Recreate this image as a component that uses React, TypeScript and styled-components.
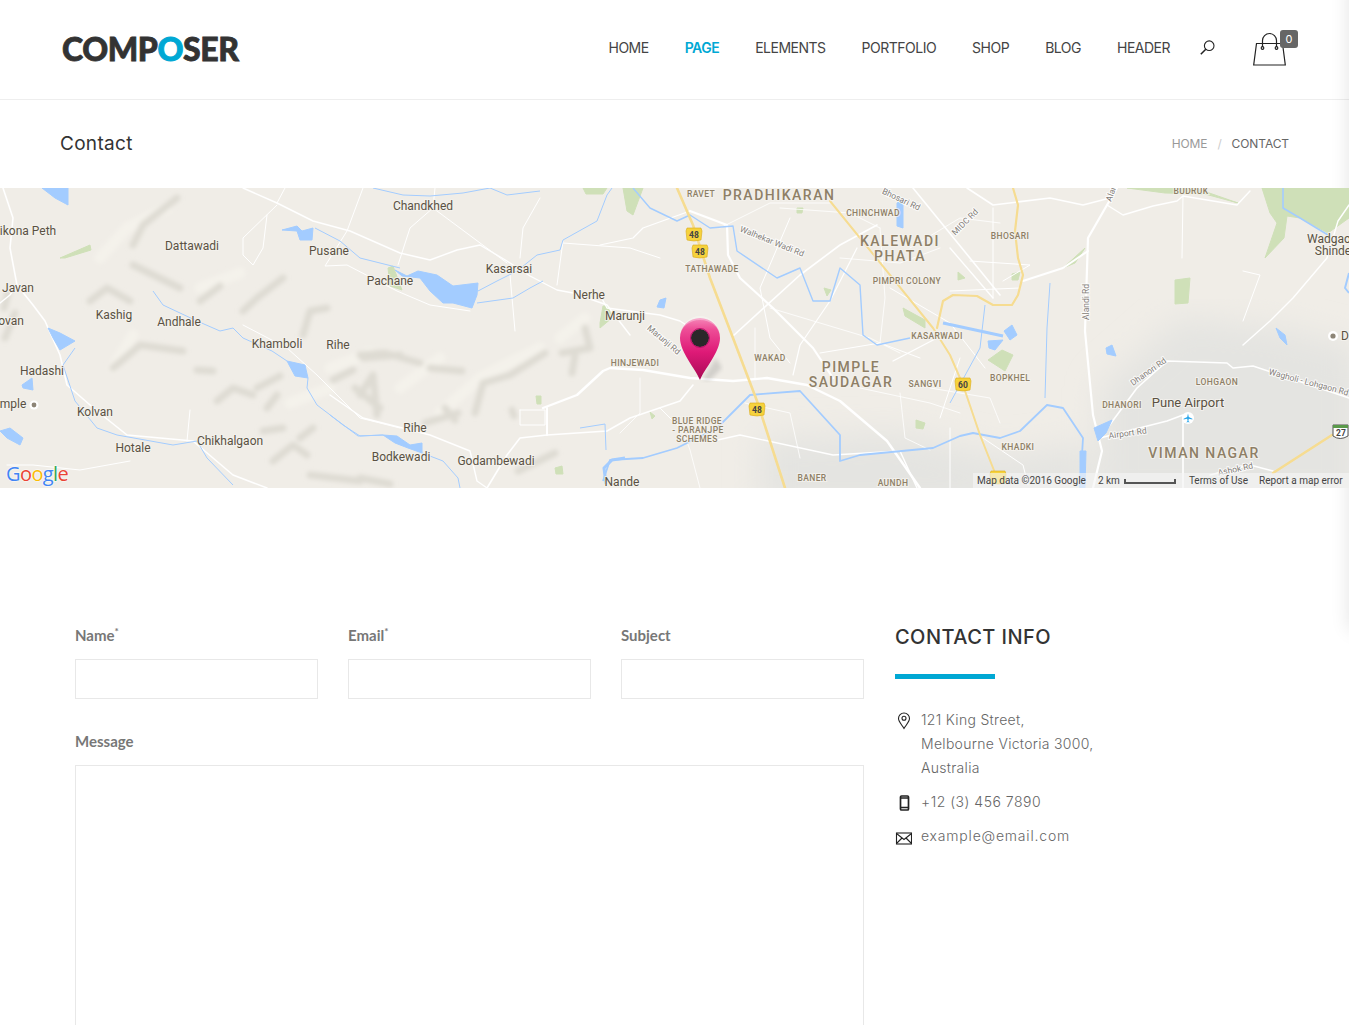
import React from "react";
import styled, { createGlobalStyle } from "styled-components";

const GlobalStyle = createGlobalStyle`
  html, body {
    margin: 0;
    padding: 0;
    height: 1025px;
    overflow: hidden;
    background: #fff;
  }
  * { box-sizing: border-box; }
`;

const POP = `"Inter", "Noto Sans", sans-serif`;

const Page = styled.div`
  position: relative;
  width: 1349px;
  height: 1025px;
  overflow: hidden;
  font-family: ${POP};
`;

// the closed off-canvas panel, only its shadow is visible
const OffCanvas = styled.div`
  position: absolute;
  top: -20px;
  left: 100%;
  width: 300px;
  height: 650px;
  box-shadow: 0 0 18px rgba(0, 0, 0, 0.11);
`;

const Header = styled.header`
  height: 100px;
  border-bottom: 1px solid #eeeeee;
  display: flex;
  align-items: center;
  justify-content: space-between;
  padding: 0 51px 4px 62px;
`;

const Logo = styled.div`
  font-family: "Lato", sans-serif;
  font-weight: 900;
  font-size: 32px;
  letter-spacing: -0.4px;
  line-height: 1;
  margin: 2px 0 0 0;
  color: #333;
  -webkit-text-stroke: 0.8px #333;
  span {
    color: #00a8d4;
    -webkit-text-stroke: 1px #00a8d4;
  }
`;

const HeaderRight = styled.div`
  display: flex;
  align-items: center;
`;

const Nav = styled.nav`
  display: flex;
  gap: 36px;
`;

const NavLink = styled.a<{ $active?: boolean }>`
  font-size: 14px;
  letter-spacing: -0.5px;
  font-weight: ${(p) => (p.$active ? 600 : 400)};
  color: ${(p) => (p.$active ? "#00a8d4" : "#444")};
`;

const SearchButton = styled.div`
  margin-left: 30px;
  width: 15px;
  height: 15px;
  display: flex;
`;

const Cart = styled.div`
  position: relative;
  margin-left: 38px;
  width: 45px;
  height: 34px;
  margin-top: 2px;
`;

const Badge = styled.span`
  position: absolute;
  left: 27px;
  top: -2px;
  width: 18px;
  height: 18px;
  border-radius: 3px;
  background: #666;
  color: #fff;
  font-size: 11px;
  display: flex;
  align-items: center;
  justify-content: center;
`;

const TitleBar = styled.div`
  height: 88px;
  display: flex;
  align-items: center;
  justify-content: space-between;
  padding: 0 60px 2px;
`;

const PageTitle = styled.h1`
  margin: 0;
  font-size: 19px;
  font-weight: 400;
  color: #333;
  letter-spacing: 0.3px;
`;

const Crumbs = styled.div`
  display: flex;
  align-items: center;
  font-size: 12px;
  letter-spacing: -0.1px;
`;

const Crumb = styled.span<{ $current?: boolean }>`
  color: ${(p) => (p.$current ? "#666" : "#999")};
`;

const CrumbSep = styled.span`
  color: #ccc;
  margin: 0 10px;
`;

const MapFrame = styled.div`
  position: relative;
  height: 300px;
  background: #f0ede7;
  overflow: hidden;
`;

const MapSvg = styled.svg`
  display: block;
  width: 1349px;
  height: 300px;
`;

const Road = styled.polyline<{ $w: number }>`
  fill: none;
  stroke: #fff;
  stroke-width: ${(p) => p.$w};
  stroke-linejoin: round;
  stroke-linecap: round;
`;

const Highway = styled(Road)`
  stroke: #f6dc91;
`;

const River = styled.polyline<{ $w: number }>`
  fill: none;
  stroke: #a3ccff;
  stroke-width: ${(p) => p.$w};
  stroke-linejoin: round;
`;

const Water = styled.polygon`
  fill: #a3ccff;
  stroke: #a3ccff;
  stroke-width: 1;
  stroke-linejoin: round;
`;

const Green = styled.polygon`
  fill: #cfe0b8;
  stroke: #cfe0b8;
  stroke-width: 1;
  stroke-linejoin: round;
`;

const Hill = styled.polyline<{ $light?: boolean }>`
  fill: none;
  stroke: ${(p) => (p.$light ? "#f4f2eb" : "#dedbd3")};
  stroke-width: ${(p) => (p.$light ? 11 : 7)};
  stroke-linecap: round;
  stroke-linejoin: round;
`;

const Urban = styled.polygon`
  fill: #e4e4e1;
`;

const Place = styled.text<{ $size?: number }>`
  font-family: "Roboto", sans-serif;
  font-size: ${(p) => p.$size || 12}px;
  fill: #5a5143;
  text-anchor: middle;
  paint-order: stroke;
  stroke: rgba(245, 243, 238, 0.8);
  stroke-width: 2px;
`;

const District = styled.text<{ $big?: boolean }>`
  font-family: "Roboto", sans-serif;
  font-size: ${(p) => (p.$big ? 14 : 8.5)}px;
  font-weight: 500;
  letter-spacing: ${(p) => (p.$big ? 1.5 : 0.4)}px;
  fill: #8e7f66;
  text-anchor: middle;
  paint-order: stroke;
  stroke: rgba(245, 243, 238, 0.8);
  stroke-width: 2px;
`;

const RoadName = styled.text`
  font-family: "Roboto", sans-serif;
  font-size: 8.5px;
  fill: #85807a;
  text-anchor: middle;
  paint-order: stroke;
  stroke: rgba(255, 255, 255, 0.8);
  stroke-width: 2px;
`;

const ShieldText = styled.text`
  font-family: "Roboto", sans-serif;
  font-size: 8.5px;
  font-weight: 700;
  fill: #444;
  text-anchor: middle;
`;

const GoogleMark = styled.text`
  font-family: "Open Sans", sans-serif;
  font-size: 20px;
  font-weight: 400;
  letter-spacing: -0.6px;
  paint-order: stroke;
  stroke: rgba(255, 255, 255, 0.6);
  stroke-width: 1.5px;
`;

const MapCredits = styled.div`
  position: absolute;
  right: 0;
  bottom: 0;
  left: 973px;
  height: 15px;
  padding-left: 4px;
  display: flex;
  align-items: center;
  background: rgba(245, 245, 245, 0.62);
  font-family: "Roboto", sans-serif;
  font-size: 10px;
  color: #444;
  white-space: nowrap;
`;

const Credit = styled.span<{ $gap?: number }>`
  margin-left: ${(p) => p.$gap || 0}px;
`;

const ScaleBar = styled.span`
  width: 52px;
  height: 5px;
  margin-left: 4px;
  margin-top: 2px;
  border: 1px solid #555;
  border-top: 0;
  border-width: 0 2px 2px 2px;
`;

const Main = styled.main`
  display: grid;
  grid-template-columns: 789px 300px;
  column-gap: 31px;
  padding: 138px 0 0 75px;
`;

const FormGrid = styled.form`
  display: flex;
  flex-direction: column;
  gap: 33px;
`;

const FieldRow = styled.div`
  display: grid;
  grid-template-columns: repeat(3, 243px);
  column-gap: 30px;
`;

const Field = styled.div`
  display: flex;
  flex-direction: column;
`;

const Label = styled.label`
  font-family: "Lato", sans-serif;
  font-weight: 700;
  font-size: 15px;
  line-height: 18px;
  color: #777;
  margin-bottom: 15px;
  sup {
    font-size: 10px;
    line-height: 0;
  }
`;

const Input = styled.input`
  height: 40px;
  border: 1px solid #e8e8e8;
  background: #fff;
  outline: 0;
`;

const TextArea = styled.textarea`
  height: 320px;
  border: 1px solid #e8e8e8;
  background: #fff;
  outline: 0;
  resize: none;
`;

const Sidebar = styled.aside`
  display: flex;
  flex-direction: column;
`;

const InfoTitle = styled.h3`
  margin: 0;
  font-size: 20px;
  line-height: 22px;
  font-weight: 500;
  color: #333;
  letter-spacing: 0.45px;
`;

const InfoBar = styled.div`
  width: 100px;
  height: 5px;
  margin: 26px 0 29px;
  background: #00a8d4;
`;

const InfoList = styled.div`
  display: flex;
  flex-direction: column;
  gap: 10px;
`;

const InfoRow = styled.div<{ $spacing: number }>`
  display: flex;
  gap: 9px;
  font-size: 14px;
  font-weight: 300;
  line-height: 24px;
  letter-spacing: ${(p) => p.$spacing}px;
  color: #666;
`;

const InfoIcon = styled.svg<{ $thick?: boolean }>`
  flex: none;
  width: 17px;
  height: 24px;
  fill: none;
  stroke: #222;
  stroke-width: ${(p) => (p.$thick ? 1.7 : 1.1)};
`;

const roads: [number, string][] = [
  [1.6, "3,0 13,30 10,60 17,97 33,117 45,133 60,167 67,197 97,223 127,247 193,253 233,287 267,300"],
  [1.4, "0,115 10,107 17,97"],
  [1.4, "243,0 277,15 313,33 350,43 400,65 430,72 457,62 480,57 507,73 530,88 557,102 573,105 607,117 630,147"],
  [1, "277,15 285,0"],
  [1, "277,17 243,50 243,67 253,77 263,60 267,27"],
  [1, "363,0 347,43 325,78 347,77 397,103 430,117 470,123"],
  [1, "435,0 433,20 507,75"],
  [1, "433,20 410,40 398,77"],
  [1, "540,10 523,40 520,70"],
  [1, "563,53 557,97"],
  [1, "563,55 630,60 660,70"],
  [1, "510,87 515,143"],
  [1, "243,137 287,160 317,187 360,230 400,240"],
  [1.4, "330,207 363,230 430,247 470,263 477,293 487,300"],
  [2.4, "543,220 577,207 603,183 610,180 643,182 690,190 733,193 767,190 807,197 840,213 887,253 920,300"],
  [2, "547,220 547,247"],
  [1.6, "547,247 607,243 630,230 680,213 693,197"],
  [1.6, "547,247 520,250 507,267 487,300"],
  [1, "187,253 190,222"],
  [1, "7,277 33,277 80,282 130,273"],
  [2.2, "690,23 727,37 728,67 740,90 773,120 813,160 833,190"],
  [1.6, "733,148 800,87 840,57 877,37"],
  [1.4, "600,107 607,120 660,127 680,133 717,157"],
  [1.4, "713,253 740,247 833,267 900,263 917,300"],
  [1.4, "893,173 937,150"],
  [1.2, "793,187 800,157 830,113 857,60"],
  [1.6, "913,0 1000,107"],
  [1.2, "600,57 633,50 643,40 690,23"],
  [1, "890,100 950,135 985,180"],
  [1, "820,165 880,155 920,170"],
  [1, "660,220 680,240 700,250"],
  [1, "790,30 760,100 770,150 790,175"],
  [0.8, "770,120 870,150 900,165"],
  [0.8, "755,140 755,190"],
  [0.8, "880,40 885,110 880,155"],
  [0.8, "780,20 850,25 880,40"],
  [0.8, "745,215 790,225 800,270"],
  [0.8, "900,205 905,250 930,262"],
  [0.8, "860,200 930,215 960,225"],
  [0.8, "840,70 900,75 940,60"],
  [0.8, "720,40 770,15 830,15"],
  [0.8, "680,235 690,262 700,300"],
  [0.8, "640,190 640,225 620,245"],
  [0.8, "910,60 960,30 1000,35"],
  [0.8, "930,200 990,210 1000,235"],
  [2.2, "1117,0 1107,17 1088,50 1085,143 1093,227 1102,263 1093,300"],
  [2, "1023,93 1063,80 1088,63"],
  [1.4, "1107,17 1123,27 1153,18 1177,13 1183,8 1237,17 1250,3"],
  [1, "1183,8 1182,70"],
  [1.6, "967,0 993,17 1050,10 1083,17 1110,10"],
  [1.6, "1100,250 1137,200 1167,173 1227,175 1233,180 1253,178 1349,210"],
  [1.4, "1243,157 1270,133 1293,110 1327,70 1338,33 1349,17"],
  [1.6, "1100,250 1167,233 1183,227 1183,300"],
  [1.4, "1210,287 1250,277 1273,283"],
  [1.4, "950,60 993,110"],
  [1, "993,20 993,110"],
  [1, "950,103 1020,100"],
  [1, "970,73 1030,77 1003,93"],
  [1, "983,250 1023,277 1028,297"],
  [1, "1243,83 1260,87 1243,133"],
  [1, "950,240 950,300"],
  [1, "960,170 940,230"],
];

const highways: [number, string][] = [
  [2.6, "677,0 693,37 710,90 733,150 757,213 785,300"],
  [2, "830,13 933,140 950,167 963,197 980,247 997,290"],
  [2.2, "937,140 943,113 953,107 977,108 993,117 1012,117 1018,107 1023,87 1018,70 1015,43 1018,17 1013,0"],
  [2.6, "1332,247 1273,285"],
];

const rivers: [number, string][] = [
  [1.4, "633,0 650,20 677,33 690,27 710,40 733,38 737,63 777,90 800,80 813,113 830,113 840,80 860,97 863,147 877,157 910,150"],
  [1.8, "603,293 610,272 643,270 677,260 717,240 750,207 800,203 840,247 840,273 860,267 933,260 960,248 973,245 1000,250 1020,243 1047,217 1063,220 1083,250 1080,300"],
  [3, "943,135 1003,148"],
  [1, "373,0 403,7 430,8 463,5 490,0 507,7 540,3"],
  [1, "478,103 497,93 517,83 537,67 560,62 563,52 597,33 607,7 612,0"],
  [1, "477,115 513,110 530,100 543,93"],
  [1, "330,227 343,237 360,248 383,247"],
  [1, "422,265 443,273 458,290 460,300"],
  [1, "153,103 163,117 197,133 220,143 233,140 243,150 272,163 287,173"],
  [1, "308,190 307,200 317,217 358,248 383,247"],
  [1, "315,40 340,53 360,70 400,80"],
  [1, "75,160 63,177 75,213 97,240 117,247 173,257 197,253 207,270 233,297"],
  [3, "606,296 604,280 612,272 625,270"],
  [1, "580,240 605,236 606,262"],
  [1, "1050,95 1047,140 1045,210"],
  [1, "985,117 980,160 950,215"],
  [1.6, "1283,0 1283,20 1300,30 1328,47"],
  [2, "1349,85 1345,100 1349,105"],
];

const lakes = [
  "395,82 407,88 418,83 437,87 453,98 478,95 477,107 472,120 453,115 443,115 430,103 420,90 402,88",
  "383,247 397,248 410,257 422,255 422,265 408,260 395,255",
  "287,173 305,177 308,190 295,188",
  "42,0 68,0 68,17 55,10",
  "282,42 297,38 302,43 313,40 312,52 300,52 297,43",
  "48,140 60,145 75,153 60,162 53,150",
  "22,197 32,190 33,202 23,200",
  "0,243 10,240 23,250 20,257 7,250",
  "660,112 666,110 664,120 657,119",
  "1004,143 1012,137 1017,147 1010,152",
  "988,153 1003,152 995,162 989,160",
  "1106,160 1112,157 1116,168 1107,166",
  "1276,140 1285,147 1287,157 1280,150",
  "1094,240 1112,232 1106,245 1098,253",
  "1080,263 1086,263 1085,300 1080,300",
  "897,15 903,12 903,40 897,38",
];

const greens = [
  "1127,0 1195,0 1238,15 1205,6 1165,5",
  "1262,0 1349,0 1349,30 1328,45 1300,30 1287,28 1284,50 1265,70 1277,35 1270,25",
  "1175,92 1190,90 1188,115 1175,116",
  "988,172 1002,162 1013,167 1005,183",
  "623,0 643,0 633,27 627,23",
  "1063,80 1085,60 1075,75",
  "603,118 608,118 612,130 600,140 600,135",
  "903,120 925,132 925,140 905,128",
  "824,100 831,102 827,108",
  "797,20 803,20 802,25 797,25",
  "958,84 965,90 958,92",
  "1012,86 1020,84 1018,92 1012,92",
  "916,232 925,235 923,241 916,240",
  "650,224 655,228 652,231",
  "583,0 607,0 603,6 586,6",
  "555,280 562,278 563,286 556,286",
  "536,208 541,208 541,216 537,216",
  "388,80 393,78 402,102 390,98",
  "60,70 90,57 91,62 65,70",
];

const hills: string[] = [
  "133,57 143,37 177,10", "90,113 107,100 130,113", "133,77 180,100", "200,113 220,98",
  "113,180 140,157 183,163", "217,213 233,200 253,207", "243,123 257,110 283,90",
  "197,182 213,183", "257,200 280,188", "267,220 277,207", "333,192 353,182",
  "303,147 310,123 327,120", "360,207 373,187 377,227", "273,273 293,257 307,267",
  "310,287 360,293", "363,170 400,167", "263,243 283,240", "300,250 313,240",
  "360,167 385,165 420,175", "430,180 462,183", "475,225 483,195 510,187 545,165",
  "425,235 458,225", "355,200 380,220", "562,165 590,160 585,140", "575,168 572,185",
  "518,283 555,265", "360,290 390,296", "15,125 5,150", "4,120 8,105",
  "445,220 455,232", "512,222 514,228",
];

const lightHills: string[] = [
  "100,70 127,40 167,20", "113,180 133,147", "200,100 240,85", "330,180 370,165",
  "400,200 440,170", "440,225 480,190 540,160", "290,215 330,200", "560,150 585,130",
];

const places: [string, number, number, number?][] = [
  ["ikona Peth", 28, 47], ["Chandkhed", 423, 22], ["Dattawadi", 192, 62], ["Pusane", 329, 67],
  ["Pachane", 390, 97], ["Kasarsai", 509, 85], ["Nerhe", 589, 111], ["Marunji", 625, 132],
  ["Javan", 18, 104], ["ovan", 11, 137], ["Kashig", 114, 131], ["Andhale", 179, 138],
  ["Khamboli", 277, 160], ["Rihe", 338, 161], ["Hadashi", 42, 187], ["mple", 13, 220],
  ["Kolvan", 95, 228], ["Rihe", 415, 244], ["Hotale", 133, 264], ["Chikhalgaon", 230, 257],
  ["Bodkewadi", 401, 273], ["Godambewadi", 496, 277], ["Nande", 622, 298],
  ["Wadgao", 1329, 55], ["Shinde", 1333, 67], ["D", 1345, 152], ["Pune Airport", 1188, 219, 13],
];

const districts: [string, number, number, boolean?][] = [
  ["PRADHIKARAN", 779, 12, true], ["KALEWADI", 900, 58, true], ["PHATA", 900, 73, true],
  ["PIMPLE", 851, 184, true], ["SAUDAGAR", 851, 199, true], ["VIMAN NAGAR", 1204, 270, true],
  ["RAVET", 701, 9], ["CHINCHWAD", 873, 28], ["BHOSARI", 1010, 51], ["TATHAWADE", 712, 84],
  ["PIMPRI COLONY", 907, 96], ["KASARWADI", 937, 151], ["WAKAD", 770, 173], ["HINJEWADI", 635, 178],
  ["SANGVI", 925, 199], ["BOPKHEL", 1010, 193], ["LOHGAON", 1217, 197], ["DHANORI", 1122, 220],
  ["BLUE RIDGE", 697, 236], ["- PARANJPE", 698, 245], ["SCHEMES", 697, 254], ["KHADKI", 1018, 262],
  ["BANER", 812, 293], ["AUNDH", 893, 298], ["BUDRUK", 1191, 6],
];

const roadNames: [string, number, number, number][] = [
  ["Marunji Rd", 662, 154, 40], ["Walhekar Wadi Rd", 771, 56, 22], ["Bhosari Rd", 900, 14, 25],
  ["MIDC Rd", 967, 36, -45], ["Alandi Rd", 1089, 114, -90], ["Alan", 1114, 6, -70],
  ["Dhanori Rd", 1150, 186, -35], ["Wagholi - Lohgaon Rd", 1308, 197, 15],
  ["Airport Rd", 1128, 248, -8], ["Ashok Rd", 1236, 284, -12],
];

const shields: [string, number, number][] = [
  ["48", 694, 47], ["48", 700, 64], ["48", 757, 222], ["60", 963, 197], ["", 998, 290],
];

function MapDrawing() {
  return (
    <MapSvg viewBox="0 0 1349 300">
      <defs>
        <filter id="crisp"><feGaussianBlur stdDeviation="0.35" /></filter>
        <filter id="soft"><feGaussianBlur stdDeviation="2.2" /></filter>
        <filter id="softer"><feGaussianBlur stdDeviation="16" /></filter>
        <linearGradient id="pin" x1="0" y1="0" x2="0" y2="1">
          <stop offset="0" stopColor="#f587b8" />
          <stop offset="0.18" stopColor="#ee4e97" />
          <stop offset="0.55" stopColor="#de1a77" />
          <stop offset="1" stopColor="#a80a55" />
        </linearGradient>
      </defs>

      <g filter="url(#softer)">
        <Urban points="1100,200 1180,130 1280,140 1360,160 1360,320 1100,320" />
        <Urban points="760,250 900,245 1000,268 1090,255 1090,320 760,320" />
      </g>
      <g filter="url(#soft)">
        {lightHills.map((h) => <Hill key={h} $light points={h} />)}
        {hills.map((h) => <Hill key={h} points={h} />)}
      </g>

      <g filter="url(#crisp)">
        {greens.map((g) => <Green key={g} points={g} />)}
        {roads.map(([w, r]) => <Road key={r} $w={w} points={r} />)}
        <Road $w={1} points="520,222 545,222 545,237 520,237 520,222" />
        {rivers.map(([w, r]) => <River key={r} $w={w} points={r} />)}
        {lakes.map((l) => <Water key={l} points={l} />)}
        {highways.map(([w, r]) => <Highway key={r} $w={w} points={r} />)}
      </g>

      {roadNames.map(([t, x, y, a]) => (
        <RoadName key={t} x={x} y={y} transform={`rotate(${a} ${x} ${y})`}>{t}</RoadName>
      ))}
      {districts.map(([t, x, y, big]) => <District key={t} x={x} y={y} $big={big}>{t}</District>)}
      {places.map(([t, x, y, s]) => <Place key={t + x} x={x} y={y} $size={s}>{t}</Place>)}

      {shields.map(([t, x, y]) => (
        <g key={x}>
          <path d={`M${x - 7} ${y - 7}h14l1 3-1 9q-7 2-14 0l-1-9z`} fill="#f6d23c" stroke="#d9a91a" strokeWidth="0.6" />
          <ShieldText x={x} y={y + 3}>{t}</ShieldText>
        </g>
      ))}
      <path d="M1333 237h15v11q-8 5-15 0z" fill="#fff" stroke="#555" />
      <path d="M1333 237h15v3h-15z" fill="#5a9a4a" />
      <ShieldText x={1341} y={248}>27</ShieldText>

      <circle cx="1333" cy="148" r="5" fill="#fff" />
      <circle cx="1333" cy="148" r="2.6" fill="#8d8577" />
      <circle cx="34" cy="217" r="4.5" fill="#fff" />
      <circle cx="34" cy="217" r="2.4" fill="#8d8577" />
      <circle cx="1188" cy="230" r="6" fill="#fff" />
      <path d="M1188 225.5l.8 3.6 3.6 1.6v.8l-3.6-.8-.4 2.4 1 .8v.6l-1.4-.5-1.4.5v-.6l1-.8-.4-2.4-3.6.8v-.8l3.6-1.6z" fill="#29a6ea" />

      <GoogleMark x="6" y="293">
        <tspan fill="#4285f4">G</tspan>
        <tspan fill="#ea4335">o</tspan>
        <tspan fill="#fbbc05">o</tspan>
        <tspan fill="#4285f4">g</tspan>
        <tspan fill="#34a853">l</tspan>
        <tspan fill="#ea4335">e</tspan>
      </GoogleMark>

      <path d="M702 192l14-22 6 10-12 12z" fill="#8a8a88" opacity="0.3" filter="url(#soft)" />
      <path d="M700 192C695 180 680 164 680 150a20 20 0 0 1 40 0C720 164 705 180 700 192z" fill="url(#pin)" />
      <path d="M681 147a19 19 0 0 1 38 0a19 15 0 0 0-38 0z" fill="#fff" opacity="0.3" />
      <circle cx="700" cy="150" r="9" fill="#2a2829" />
      <circle cx="700" cy="150" r="9.5" fill="none" stroke="#b9106a" strokeWidth="1" />
    </MapSvg>
  );
}

export default function App() {
  return (
    <Page>
      <GlobalStyle />
      <OffCanvas />
      <Header>
        <Logo>COMP<span>O</span>SER</Logo>
        <HeaderRight>
          <Nav>
            <NavLink>HOME</NavLink>
            <NavLink $active>PAGE</NavLink>
            <NavLink>ELEMENTS</NavLink>
            <NavLink>PORTFOLIO</NavLink>
            <NavLink>SHOP</NavLink>
            <NavLink>BLOG</NavLink>
            <NavLink>HEADER</NavLink>
          </Nav>
          <SearchButton>
            <svg width="15" height="15" viewBox="0 0 15 15" fill="none" stroke="#222" strokeWidth="1.1">
              <circle cx="9.2" cy="5.7" r="4.8" />
              <path d="M5.8 9.2L.8 14.2" strokeWidth="1.5" />
            </svg>
          </SearchButton>
          <Cart>
            <svg width="34" height="34" viewBox="0 0 34 34" fill="none" stroke="#222" strokeWidth="1.2">
              <path d="M3.5 11.5h26l2.8 21.5H.7z" />
              <path d="M9.5 15V8.5a7 7 0 0 1 14 0V15" />
              <circle cx="9.5" cy="16" r="1.3" />
              <circle cx="23.5" cy="16" r="1.3" />
            </svg>
            <Badge>0</Badge>
          </Cart>
        </HeaderRight>
      </Header>

      <TitleBar>
        <PageTitle>Contact</PageTitle>
        <Crumbs>
          <Crumb>HOME</Crumb>
          <CrumbSep>/</CrumbSep>
          <Crumb $current>CONTACT</Crumb>
        </Crumbs>
      </TitleBar>

      <MapFrame>
        <MapDrawing />
        <MapCredits>
          <Credit>Map data ©2016 Google</Credit>
          <Credit $gap={12}>2 km</Credit>
          <ScaleBar />
          <Credit $gap={13}>Terms of Use</Credit>
          <Credit $gap={11}>Report a map error</Credit>
        </MapCredits>
      </MapFrame>

      <Main>
        <FormGrid>
          <FieldRow>
            <Field>
              <Label>Name<sup>*</sup></Label>
              <Input />
            </Field>
            <Field>
              <Label>Email<sup>*</sup></Label>
              <Input />
            </Field>
            <Field>
              <Label>Subject</Label>
              <Input />
            </Field>
          </FieldRow>
          <Field>
            <Label>Message</Label>
            <TextArea />
          </Field>
        </FormGrid>

        <Sidebar>
          <InfoTitle>CONTACT INFO</InfoTitle>
          <InfoBar />
          <InfoList>
            <InfoRow $spacing={0.3}>
              <InfoIcon viewBox="0 0 17 24">
                <path d="M9 20.5C6.5 16.5 3.5 13.5 3.5 10.5a5.5 5.5 0 0 1 11 0C14.5 13.5 11.5 16.5 9 20.5z" />
                <circle cx="9" cy="10.3" r="2" />
              </InfoIcon>
              <div>121 King Street,<br />Melbourne Victoria 3000,<br />Australia</div>
            </InfoRow>
            <InfoRow $spacing={0.5}>
              <InfoIcon viewBox="0 0 17 24" $thick>
                <rect x="5.5" y="6" width="8" height="14" rx="1" />
                <path d="M5.5 8h8M5.5 17.5h8" />
              </InfoIcon>
              <div>+12 (3) 456 7890</div>
            </InfoRow>
            <InfoRow $spacing={0.8}>
              <InfoIcon viewBox="0 0 17 24">
                <rect x="1.5" y="9" width="15" height="11" />
                <path d="M1.5 9.5L9 15.5l7.5-6M1.5 19.5l5.5-5.5M16.5 19.5L11 14" />
              </InfoIcon>
              <div>example@email.com</div>
            </InfoRow>
          </InfoList>
        </Sidebar>
      </Main>
    </Page>
  );
}
